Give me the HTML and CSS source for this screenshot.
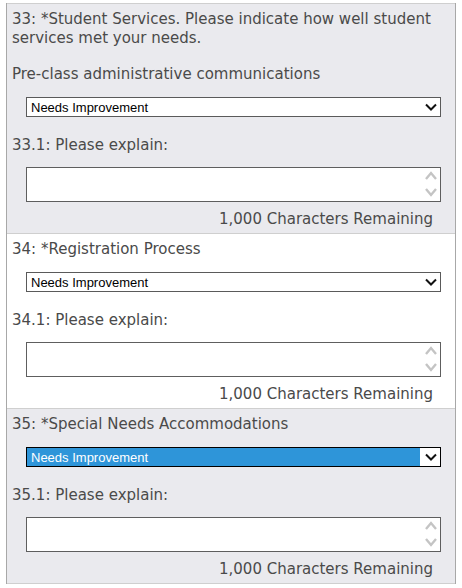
FILE: index.html
```html
<!DOCTYPE html>
<html>
<head>
<meta charset="utf-8">
<link rel="stylesheet" href="styles.css">
</head>
<body>
<div class="survey">
  <section class="question shaded first">
    <p class="q-title">33: *Student Services. Please indicate how well student services met your needs.</p>
    <p class="q-sub">Pre-class administrative communications</p>
    <div class="select-wrap">
      <select class="answer"><option>Needs Improvement</option></select>
      <svg class="chev" width="12" height="8" viewBox="0 0 12 8"><path d="M1 1.5 L6 6.5 L11 1.5" fill="none" stroke="#111" stroke-width="2"/></svg>
    </div>
    <p class="q-explain">33.1: Please explain:</p>
    <div class="text-wrap">
      <textarea class="comment"></textarea>
      <svg class="spin" width="14" height="30" viewBox="0 0 14 30"><path d="M2 10 L7 4 L12 10" fill="none" stroke="#c4c4c4" stroke-width="2.4"/><path d="M2 20 L7 26 L12 20" fill="none" stroke="#c4c4c4" stroke-width="2.4"/></svg>
    </div>
    <p class="remaining">1,000 Characters Remaining</p>
  </section>
  <section class="question">
    <p class="q-title">34: *Registration Process</p>
    <div class="select-wrap">
      <select class="answer"><option>Needs Improvement</option></select>
      <svg class="chev" width="12" height="8" viewBox="0 0 12 8"><path d="M1 1.5 L6 6.5 L11 1.5" fill="none" stroke="#111" stroke-width="2"/></svg>
    </div>
    <p class="q-explain">34.1: Please explain:</p>
    <div class="text-wrap">
      <textarea class="comment"></textarea>
      <svg class="spin" width="14" height="30" viewBox="0 0 14 30"><path d="M2 10 L7 4 L12 10" fill="none" stroke="#c4c4c4" stroke-width="2.4"/><path d="M2 20 L7 26 L12 20" fill="none" stroke="#c4c4c4" stroke-width="2.4"/></svg>
    </div>
    <p class="remaining">1,000 Characters Remaining</p>
  </section>
  <section class="question shaded">
    <p class="q-title">35: *Special Needs Accommodations</p>
    <div class="select-wrap focused">
      <select class="answer"><option>Needs Improvement</option></select>
      <svg class="chev" width="12" height="8" viewBox="0 0 12 8"><path d="M1 1.5 L6 6.5 L11 1.5" fill="none" stroke="#111" stroke-width="2"/></svg>
    </div>
    <p class="q-explain">35.1: Please explain:</p>
    <div class="text-wrap">
      <textarea class="comment"></textarea>
      <svg class="spin" width="14" height="30" viewBox="0 0 14 30"><path d="M2 10 L7 4 L12 10" fill="none" stroke="#c4c4c4" stroke-width="2.4"/><path d="M2 20 L7 26 L12 20" fill="none" stroke="#c4c4c4" stroke-width="2.4"/></svg>
    </div>
    <p class="remaining">1,000 Characters Remaining</p>
  </section>
</div>
</body>
</html>
```

FILE: styles.css
```css
* { box-sizing: border-box; }
html, body { margin: 0; padding: 0; background: #ffffff; }
body {
  font-family: "DejaVu Sans", Verdana, sans-serif;
  font-size: 15px;
  line-height: 19px;
  color: #4a4a4a;
}
.survey {
  margin: 3px 0 0 6px;
  width: 450px;
  border-left: 1px solid #a8a8a8;
  border-right: 1px solid #a8a8a8;
}
.question {
  display: flex;
  flex-direction: column;
  padding: 6px 22px 4px 5px;
  border-bottom: 1px solid #cfcfcf;
}
.question.first { border-top: 1px solid #cfcfcf; }
.shaded { background: #eaeaee; }
.question p { margin: 0; }
.question .q-title { margin-bottom: 13px; }
.question.first .q-title { margin-bottom: 17px; }
.question .q-sub { margin-bottom: 13px; }
.question .q-explain { margin-bottom: 12px; }
.select-wrap {
  position: relative;
  margin-left: 14px;
  width: 415px;
  height: 20px;
  margin-bottom: 19px;
}
.answer {
  -webkit-appearance: none;
  appearance: none;
  display: block;
  width: 100%;
  height: 20px;
  margin: 0;
  padding: 0 0 0 4px;
  border: 1px solid #5a5a5a;
  border-radius: 0;
  background: #ffffff;
  font-family: "Liberation Sans", Arial, sans-serif;
  font-size: 13px;
  color: #000;
  outline: none;
}
.focused .answer {
  border-color: #000;
  background: linear-gradient(to right, #2e95d9 0, #2e95d9 393px, #ffffff 393px);
  color: #ffffff;
}
.chev {
  position: absolute;
  right: 4px;
  top: 6px;
}
.text-wrap {
  position: relative;
  margin-left: 14px;
  width: 415px;
  height: 35px;
  margin-bottom: 8px;
}
.comment {
  display: block;
  width: 100%;
  height: 35px;
  margin: 0;
  border: 1px solid #5e5e5e;
  border-radius: 0;
  background: #fff;
  resize: none;
  outline: none;
}
.spin {
  position: absolute;
  right: 3px;
  top: 2px;
}
.remaining {
  text-align: right;
}
```
